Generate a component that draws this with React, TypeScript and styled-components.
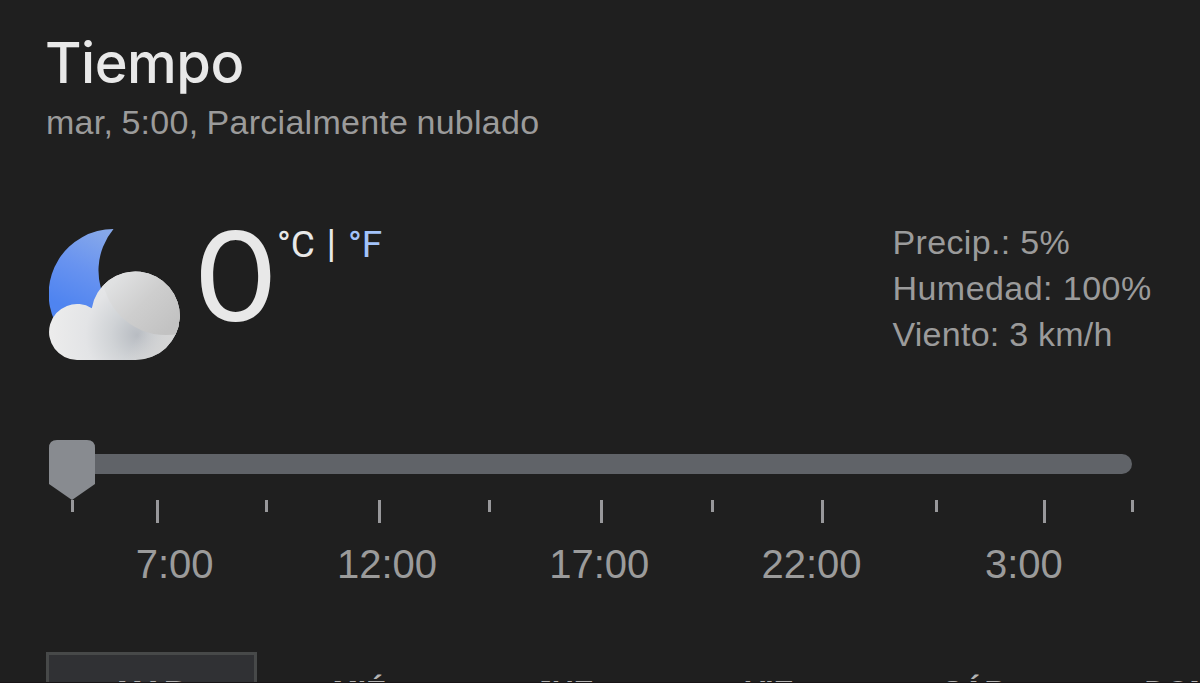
import styled, { createGlobalStyle } from "styled-components";

const GlobalStyle = createGlobalStyle`
  * {
    box-sizing: border-box;
  }

  body {
    margin: 0;
    background: #1f1f1f;
    overflow: hidden;
  }
`;

const TICKS = [
  { gap: 0, tall: false },
  { gap: 82, tall: true },
  { gap: 106, tall: false },
  { gap: 110, tall: true },
  { gap: 107, tall: false },
  { gap: 109, tall: true },
  { gap: 108, tall: false },
  { gap: 107, tall: true },
  { gap: 111, tall: false },
  { gap: 105, tall: true },
  { gap: 85, tall: false },
];

const HOURS = ["7:00", "12:00", "17:00", "22:00", "3:00"];

const DAYS = ["MAR", "MIÉ", "JUE", "VIE", "SÁB", "DOM"];

const WeatherIcon = () => (
  <Icon viewBox="0 0 132 132">
    <defs>
      <linearGradient id="moon" x1="0.75" y1="0" x2="0.45" y2="0.9">
        <stop offset="0" stopColor="#86a8ea" />
        <stop offset="0.5" stopColor="#6893f0" />
        <stop offset="1" stopColor="#4f84f0" />
      </linearGradient>
      <radialGradient id="base" gradientUnits="userSpaceOnUse" cx="88" cy="106" r="86">
        <stop offset="0" stopColor="#b8bcc2" />
        <stop offset="0.3" stopColor="#d0d3d6" />
        <stop offset="0.6" stopColor="#e3e4e6" />
        <stop offset="1" stopColor="#ececec" />
      </radialGradient>
      <linearGradient id="edge" gradientUnits="userSpaceOnUse" x1="88" y1="108" x2="116" y2="126">
        <stop offset="0" stopColor="#d4d4d4" stopOpacity="0" />
        <stop offset="1" stopColor="#d4d4d4" />
      </linearGradient>
      <linearGradient id="puff" gradientUnits="userSpaceOnUse" x1="60" y1="56" x2="112" y2="108">
        <stop offset="0" stopColor="#e0e1e2" />
        <stop offset="0.5" stopColor="#cecece" />
        <stop offset="1" stopColor="#c2c2c2" />
      </linearGradient>
      <clipPath id="cloud">
        <path d="M28 131A28 28 0 1 1 42.8 79.2A44.3 44.3 0 1 1 86.5 131Z" />
      </clipPath>
    </defs>
    <path d="M64.5 0A65 65 0 0 0 6 93L60 93V77A65 65 0 0 1 64.5 0Z" fill="url(#moon)" />
    <g clipPath="url(#cloud)">
      <rect width="132" height="132" fill="url(#base)" />
      <rect x="60" y="60" width="72" height="72" fill="url(#edge)" />
      <circle cx="117" cy="42" r="64" fill="url(#puff)" />
    </g>
  </Icon>
);

export default function App() {
  return (
    <Page>
      <GlobalStyle />
      <Title>Tiempo</Title>
      <Subtitle>mar, 5:00, Parcialmente nublado</Subtitle>

      <Current>
        <WeatherIcon />
        <Temperature>0</Temperature>
        <Units>
          <Unit>°C</Unit>
          <Separator>|</Separator>
          <Unit $link>°F</Unit>
        </Units>
        <Details>
          <Detail $spacing={0.35}>Precip.: 5%</Detail>
          <Detail $spacing={0.45}>Humedad: 100%</Detail>
          <Detail $spacing={0.25}>Viento: 3 km/h</Detail>
        </Details>
      </Current>

      <Slider>
        <Thumb viewBox="0 0 46 60">
          <path d="M8 0H38Q46 0 46 8V44L23 60L0 44V8Q0 0 8 0Z" fill="#888b90" />
        </Thumb>
        <Track />
      </Slider>

      <Ticks>
        {TICKS.map((tick, i) => (
          <Tick key={i} $gap={tick.gap} $tall={tick.tall} />
        ))}
      </Ticks>

      <Hours>
        {HOURS.map((hour) => (
          <Hour key={hour}>{hour}</Hour>
        ))}
      </Hours>

      <Days>
        {DAYS.map((day, i) => (
          <Day key={day} $active={i === 0}>
            {day}
          </Day>
        ))}
      </Days>
    </Page>
  );
}

const Page = styled.main`
  display: flex;
  flex-direction: column;
  width: 1200px;
  height: 683px;
  padding: 30px 0 0 46px;
  overflow: hidden;
  background: #1f1f1f;
  border-bottom: 1px solid #181416;
  color: #9b9b9b;
  font-family: "Liberation Sans", Arial, sans-serif;
`;

const Title = styled.h1`
  margin: 0;
  height: 69px;
  font-family: Inter, sans-serif;
  font-size: 56px;
  font-weight: 500;
  line-height: 66px;
  letter-spacing: -0.5px;
  text-indent: -1px;
  color: #e8e8e8;
`;

const Subtitle = styled.p`
  margin: 0;
  height: 129px;
  font-size: 34px;
  line-height: 46px;
  letter-spacing: 0.27px;
  word-spacing: -1.5px;
`;

const Current = styled.section`
  display: flex;
  align-items: flex-start;
  height: 212px;
  padding: 1px 0 0 3px;
`;

const Icon = styled.svg`
  flex: none;
  width: 132px;
  height: 132px;
`;

const Temperature = styled.span`
  width: 96px;
  padding-left: 11px;
  font-family: Inter, sans-serif;
  font-size: 123px;
  line-height: 96px;
  color: #e8e8e8;
  transform: scaleX(1.1);
  transform-origin: left;
`;

const Units = styled.div`
  display: flex;
  width: 615.5px;
  font-family: Roboto, sans-serif;
  font-size: 37px;
  line-height: 32px;
  color: #e8e8e8;
`;

const Unit = styled.span<{ $link?: boolean }>`
  color: ${({ $link }) => ($link ? "#a3c3fa" : "#e8e8e8")};
`;

const Separator = styled.span`
  width: 33px;
  text-align: center;
  font-family: "Liberation Sans", Arial, sans-serif;
  font-size: 35px;
  line-height: 28px;
`;

const Details = styled.div`
  display: flex;
  flex-direction: column;
  margin-top: -10px;
`;

const Detail = styled.span<{ $spacing: number }>`
  font-size: 34px;
  line-height: 46px;
  letter-spacing: ${({ $spacing }) => $spacing}px;
  white-space: nowrap;
`;

const Slider = styled.div`
  display: flex;
  width: 1086px;
  height: 60px;
  padding-left: 2.5px;
`;

const Thumb = styled.svg`
  flex: none;
  width: 46px;
  height: 60px;
`;

const Track = styled.div`
  flex: 1;
  height: 20px;
  margin-top: 14px;
  border-radius: 0 10px 10px 0;
  background: #606368;
`;

const Ticks = styled.div`
  display: flex;
  height: 40px;
  padding-left: 25px;
`;

const Tick = styled.span<{ $gap: number; $tall: boolean }>`
  flex: none;
  width: 3px;
  height: ${({ $tall }) => ($tall ? 23 : 12)}px;
  margin-left: ${({ $gap }) => $gap}px;
  background: #98989b;
`;

const Hours = styled.div`
  display: grid;
  grid-template-columns: repeat(5, 212.3px);
  height: 112px;
  padding-left: 22.5px;
`;

const Hour = styled.span`
  font-size: 40px;
  line-height: 48px;
  text-align: center;
`;

const Days = styled.div`
  display: flex;
  flex: 1;
  width: 1300px;
  overflow: hidden;
`;

const Day = styled.div<{ $active: boolean }>`
  flex: none;
  width: ${({ $active }) => ($active ? 211 : 205)}px;
  height: 120px;
  padding-top: ${({ $active }) => ($active ? 19 : 22)}px;
  border: ${({ $active }) => ($active ? "3px solid #474949" : "none")};
  background: ${({ $active }) => ($active ? "#303134" : "transparent")};
  color: #b4b4b4;
  font-size: 30px;
  font-weight: 700;
  line-height: 34px;
  text-align: center;
`;
